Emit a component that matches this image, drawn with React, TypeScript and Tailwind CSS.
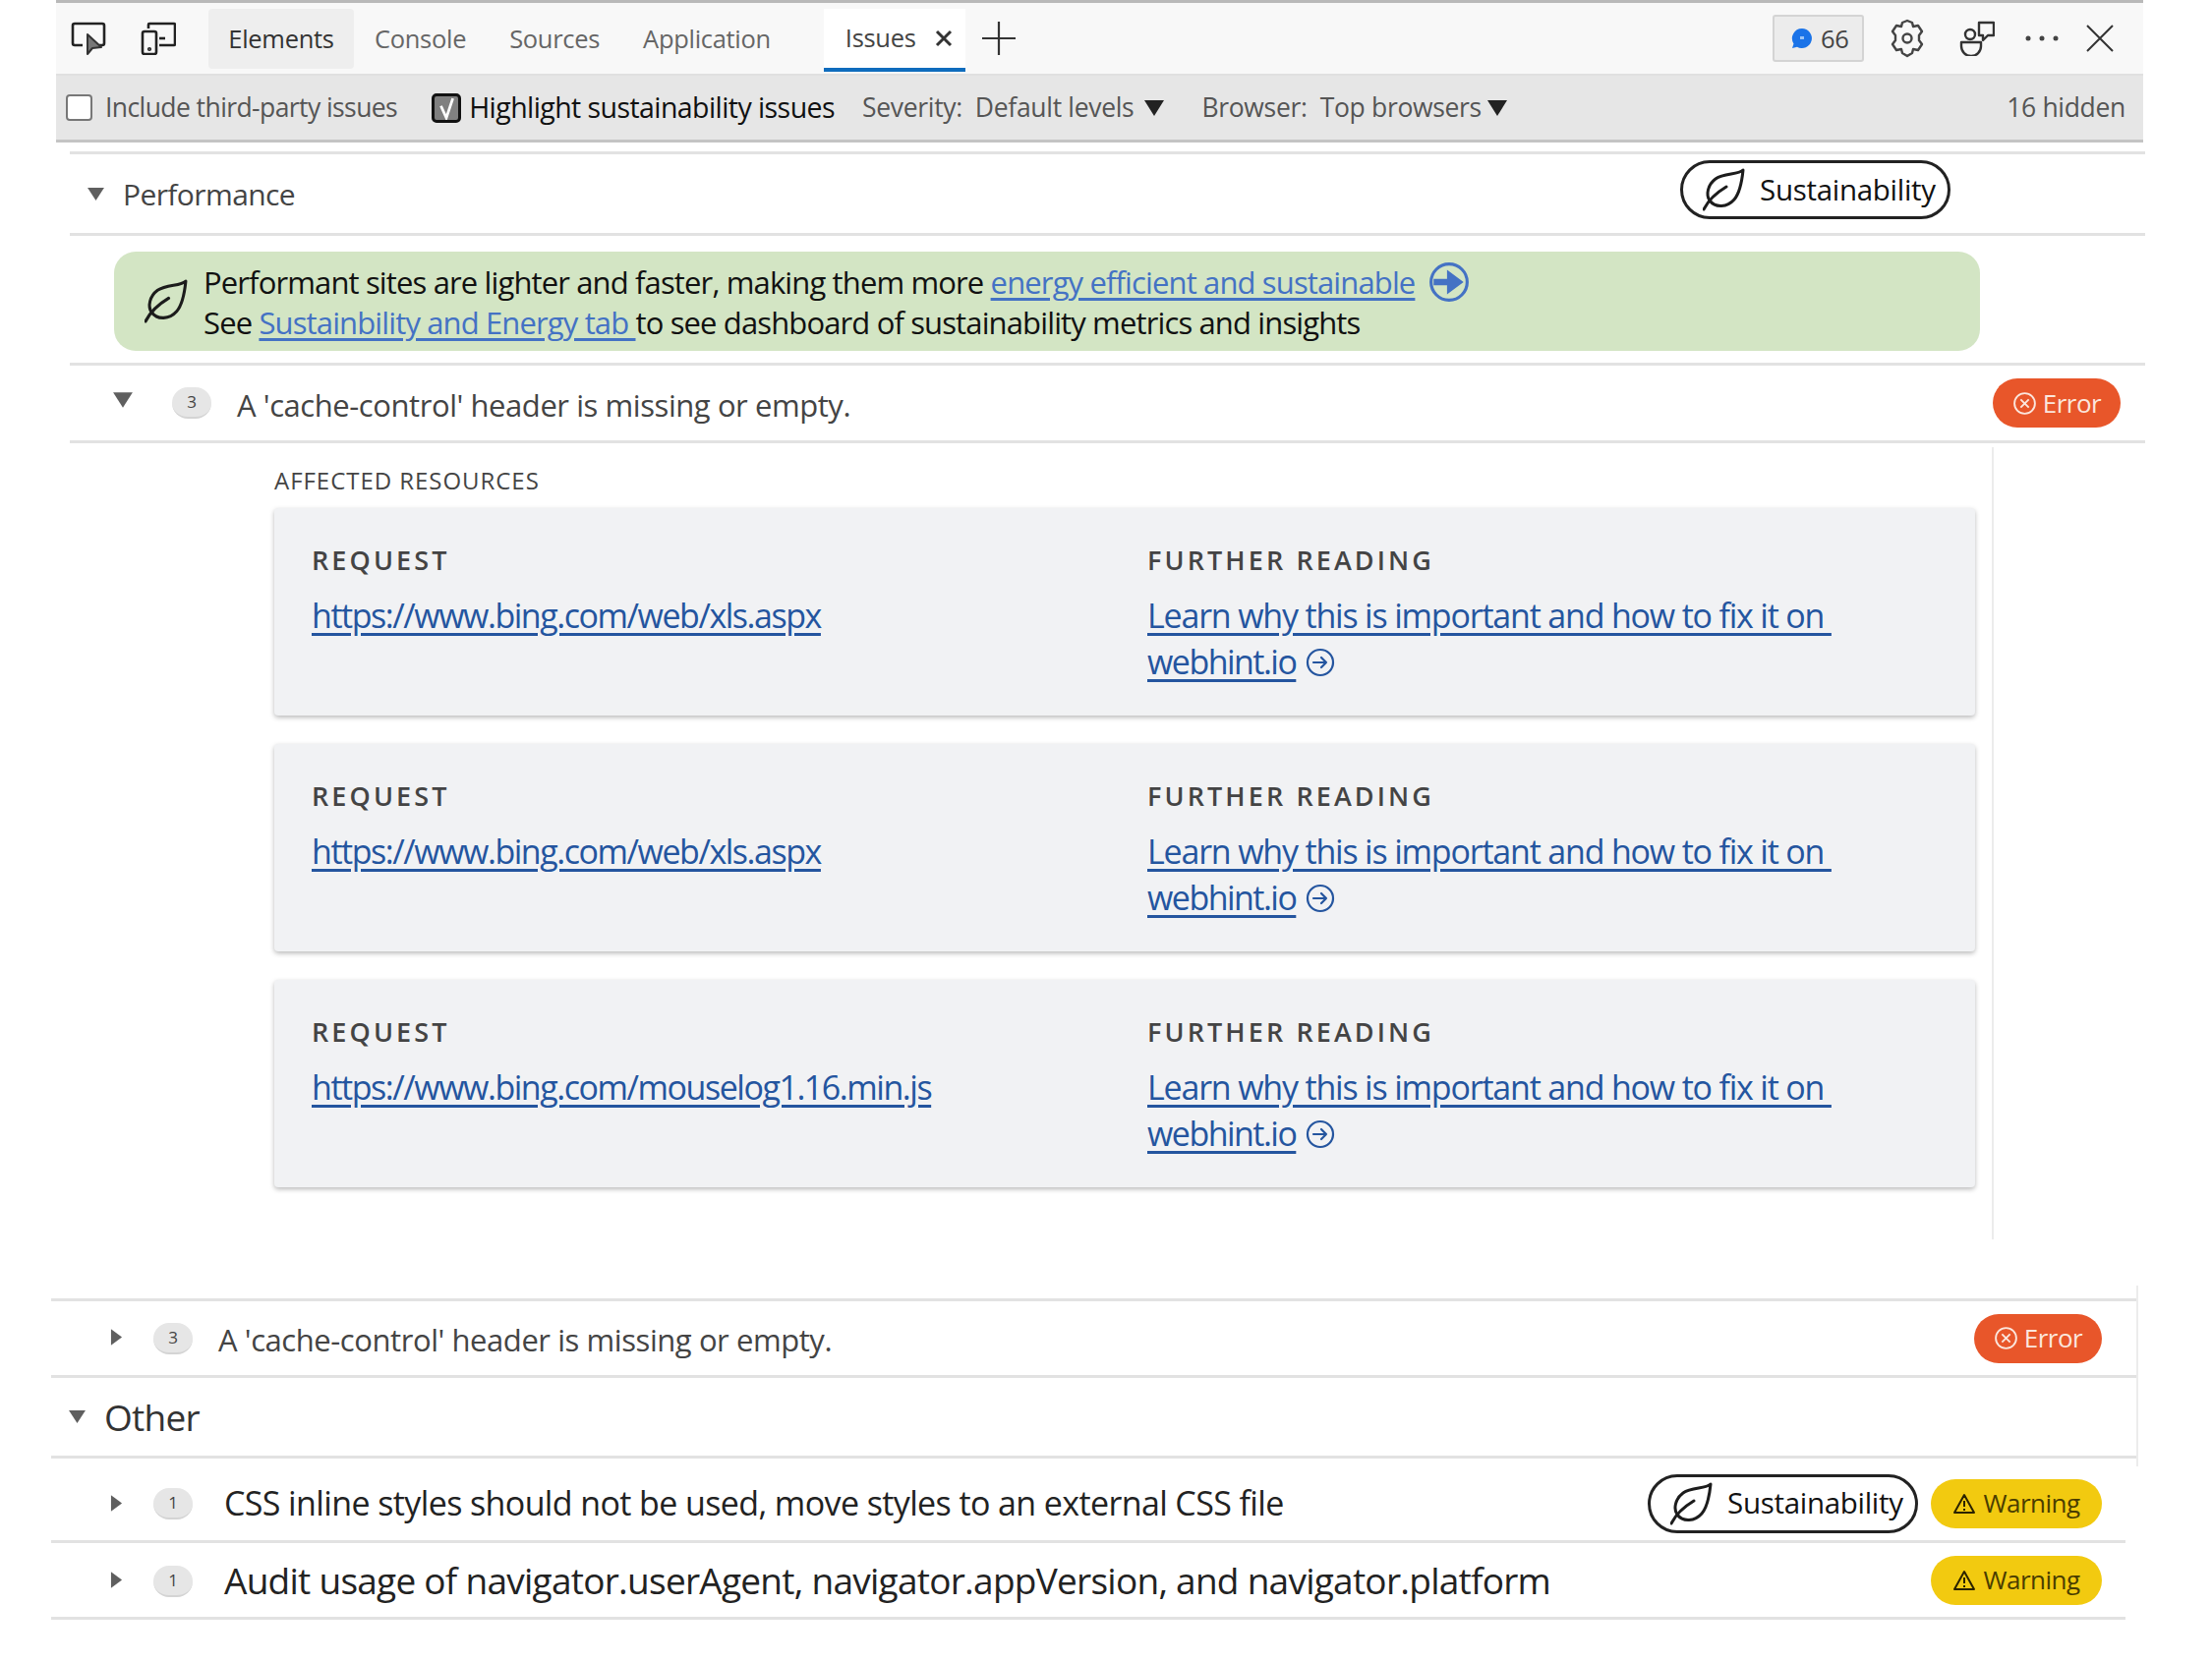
import React from 'react';

const Leaf = ({ className }: { className: string }) => (
  <svg viewBox="0 0 44 44" className={className} fill="none" stroke="#1c1c1c" strokeWidth="3" strokeLinecap="round" strokeLinejoin="round">
    <path d="M41 2C36 7 22 5 13 11C5 17 3 27 7 33C13 41 25 40 32 32C38 25 40 12 41 2Z" />
    <path d="M1 42C6 32 14 25 24 19" />
  </svg>
);

const TriDown = ({ className }: { className: string }) => (
  <svg viewBox="0 0 20 16" className={className} fill="#5f5f5f"><polygon points="1,1 19,1 10,15" /></svg>
);

const TriRight = ({ className }: { className: string }) => (
  <svg viewBox="0 0 14 18" className={className} fill="#5f5f5f"><polygon points="1,0 13,9 1,18" /></svg>
);

const Count = ({ n, className }: { n: number; className: string }) => (
  <div className={`flex h-[32px] w-[40px] shrink-0 items-center justify-center rounded-full border-b-2 border-[#d4d4d4] bg-[#e6e6e6] text-[17px] text-[#444] ${className}`}>{n}</div>
);

const SustainBadge = ({ className }: { className: string }) => (
  <div className={`flex h-[60px] w-[275px] shrink-0 items-center rounded-full border-[3px] border-[#222] bg-white pl-[20px] text-[#111] ${className}`}>
    <Leaf className="h-[44px] w-[44px]" />
    <span className="ml-[14px] text-[29.5px] tracking-[-0.01em]">Sustainability</span>
  </div>
);

const ErrorBadge = () => (
  <div className="flex h-[50px] w-[130px] shrink-0 items-center justify-center gap-[6px] rounded-[25px] bg-[#e8562a] text-[26px] tracking-[-0.02em] text-[#fbe6dd]">
    <svg viewBox="0 0 24 24" className="h-[25px] w-[25px]" fill="none" stroke="#fbe6dd" strokeWidth="1.8">
      <circle cx="12" cy="12" r="10" />
      <path d="M8 8l8 8M16 8l-8 8" />
    </svg>
    <span>Error</span>
  </div>
);

const WarningBadge = () => (
  <div className="flex h-[50px] w-[174px] shrink-0 items-center justify-center gap-[7px] rounded-[25px] bg-[#f2ca10] text-[26px] tracking-[-0.02em] text-[#4a3d00]">
    <svg viewBox="0 0 24 24" className="h-[24px] w-[24px]" fill="none" stroke="#2b2300" strokeWidth="2" strokeLinejoin="round">
      <path d="M12 3L22 21H2Z" />
      <path d="M12 9v6M12 17v2" />
    </svg>
    <span>Warning</span>
  </div>
);

const Card = ({ url }: { url: string }) => (
  <div className="flex h-[211px] w-[1730px] rounded-[4px] bg-[#f1f2f4] pt-[37px] pl-[38px] shadow-[0_2px_5px_rgba(0,0,0,0.28)]">
    <div className="w-[850px]">
      <div className="text-[27px] leading-[32px] font-semibold tracking-[0.115em] text-[#444]">REQUEST</div>
      <a className="mt-[17px] block text-[34px] leading-[47px] tracking-[-0.043em] whitespace-nowrap text-[#24559f] underline underline-offset-[5px]">{url}</a>
    </div>
    <div className="w-[700px]">
      <div className="text-[27px] leading-[32px] font-semibold tracking-[0.115em] text-[#444]">FURTHER READING</div>
      <a className="mt-[17px] block text-[34px] leading-[47px] tracking-[-0.035em] whitespace-nowrap text-[#24559f] underline underline-offset-[5px]">Learn why this is important and how to fix it on&nbsp;</a>
      <div className="flex items-center">
        <a className="text-[34px] leading-[47px] tracking-[-0.045em] text-[#24559f] underline underline-offset-[5px]">webhint.io</a>
        <svg viewBox="0 0 30 30" className="ml-[10px] h-[30px] w-[30px]" fill="none" stroke="#24559f" strokeWidth="2.2" strokeLinecap="round" strokeLinejoin="round">
          <circle cx="15" cy="15" r="13" />
          <path d="M8 15h13M16 10l5 5-5 5" />
        </svg>
      </div>
    </div>
  </div>
);

const App: React.FC = () => {
  return (
    <div className="h-[1691px] w-[2250px] overflow-hidden bg-white font-['Open_Sans',sans-serif] text-[#333]">
      <div className="ml-[57px] w-[2123px] border-t-[3px] border-[#b9b9b9]">
        {/* tab strip */}
        <div className="flex h-[72px] items-center bg-[#f8f8f8] text-[25.5px] tracking-[-0.012em] text-[#666]">
          <svg viewBox="0 0 36 34" className="ml-[15px] h-[34px] w-[36px]" fill="none" stroke="#222" strokeWidth="2.6" strokeLinejoin="round">
            <path d="M12 24H4a2 2 0 0 1-2-2V4a2 2 0 0 1 2-2h28a2 2 0 0 1 2 2v18a2 2 0 0 1-2 2h-3" />
            <path d="M17 13v20l5-6 9-1z" fill="#777" stroke="#333" strokeWidth="2" />
          </svg>
          <svg viewBox="0 0 36 34" className="ml-[35px] h-[34px] w-[36px]" fill="none" stroke="#222" strokeWidth="2.6" strokeLinejoin="round">
            <path d="M8 7V3a1 1 0 0 1 1-1h25a1 1 0 0 1 1 1v20a1 1 0 0 1-1 1H19" />
            <rect x="2" y="10" width="14" height="23" rx="2" />
            <path d="M19 17h6" />
            <circle cx="9" cy="28" r="0.8" />
          </svg>
          <div className="ml-[33px] flex h-[61px] w-[148px] items-center justify-center rounded-[4px] bg-[#eeeeee] text-[#333]">Elements</div>
          <span className="ml-[21px]">Console</span>
          <span className="ml-[44px]">Sources</span>
          <span className="ml-[44px]">Application</span>
          <div className="mt-[3px] ml-[54px] flex h-[64px] w-[144px] items-center border-b-[4px] border-[#0f6cbd] bg-white pl-[22px] text-[#444]">
            <span>Issues</span>
            <svg viewBox="0 0 18 18" className="ml-[19px] h-[18px] w-[18px]" stroke="#333" strokeWidth="3"><path d="M2 2l14 14M16 2L2 16" /></svg>
          </div>
          <svg viewBox="0 0 34 34" className="ml-[17px] h-[34px] w-[34px]" stroke="#333" strokeWidth="2.2"><path d="M17 0v34M0 17h34" /></svg>
          <div className="ml-auto flex h-[48px] w-[93px] items-center rounded-[3px] border-2 border-[#d4d4d4] bg-[#ececec] pl-[16px] text-[#444]">
            <svg viewBox="0 0 24 24" className="h-[24px] w-[24px]" fill="#1a73e8">
              <path d="M12 2a10 10 0 1 1-5 18.7L2 22l1.5-4.6A10 10 0 0 1 12 2z" />
              <rect x="10" y="10" width="4" height="3" fill="#9cc4f5" />
            </svg>
            <span className="ml-[7px]">66</span>
          </div>
          <svg viewBox="0 0 36 40" className="ml-[26px] h-[40px] w-[36px]" fill="none" stroke="#444" strokeWidth="2.4" strokeLinejoin="round">
            <path d="M18 2l5 2 1 4 5-1 4 6-3 4v5l3 4-4 6-5-1-1 4-5 3-5-3-1-4-5 1-4-6 3-4v-5l-3-4 4-6 5 1 1-4z" />
            <circle cx="18" cy="20" r="4.5" />
          </svg>
          <svg viewBox="0 0 36 36" className="ml-[35px] h-[36px] w-[36px]" fill="none" stroke="#333" strokeWidth="2.4" strokeLinejoin="round">
            <circle cx="11" cy="14" r="5" />
            <path d="M2 22h20v4a10 10 0 0 1-20 0z" />
            <path d="M20 2h15v13h-6l-5 5v-5h-4z" />
          </svg>
          <svg viewBox="0 0 36 8" className="ml-[30px] h-[8px] w-[36px]" fill="#444">
            <circle cx="4" cy="4" r="2.5" /><circle cx="18" cy="4" r="2.5" /><circle cx="32" cy="4" r="2.5" />
          </svg>
          <svg viewBox="0 0 28 28" className="mr-[30px] ml-[27px] h-[28px] w-[28px]" stroke="#333" strokeWidth="2"><path d="M1 1l26 26M27 1L1 27" /></svg>
        </div>
        {/* filter bar */}
        <div className="flex h-[70px] items-center border-t-2 border-b-[3px] border-t-[#e0e0e0] border-b-[#c4c4c4] bg-[#e6e6e6] text-[26.5px] tracking-[-0.012em] whitespace-nowrap text-[#555]">
          <div className="ml-[10px] h-[27px] w-[27px] rounded-[4px] border-2 border-[#777] bg-white" />
          <span className="ml-[13px] tracking-[-0.022em]">Include third-party issues</span>
          <div className="ml-[35px] flex h-[30px] w-[30px] items-center justify-center rounded-[5px] border-[3px] border-[#111] bg-[#808080]">
            <svg viewBox="0 0 20 20" className="h-[24px] w-[22px]" fill="none" stroke="#fff" strokeWidth="2.5"><path d="M5 8l5 11L16 1" /></svg>
          </div>
          <span className="ml-[8px] text-[28.5px] tracking-[-0.02em] text-[#111]">Highlight sustainability issues</span>
          <span className="ml-[28px]">Severity:</span>
          <span className="ml-[13px]">Default levels</span>
          <svg viewBox="0 0 20 16" className="ml-[11px] h-[16px] w-[20px]" fill="#222"><polygon points="0,0 20,0 10,16" /></svg>
          <span className="ml-[38px]">Browser:</span>
          <span className="ml-[13px]">Top browsers</span>
          <svg viewBox="0 0 20 16" className="ml-[6px] h-[16px] w-[20px]" fill="#222"><polygon points="0,0 20,0 10,16" /></svg>
          <span className="mr-[18px] ml-auto">16 hidden</span>
        </div>
      </div>

      {/* performance group */}
      <div className="mt-[9px] ml-[71px] w-[2111px]">
        <div className="flex h-[86px] items-center border-y-[3px] border-[#e2e2e2]">
          <TriDown className="ml-[17px] h-[15px] w-[19px]" />
          <span className="ml-[18px] text-[30px] tracking-[-0.02em] text-[#444]">Performance</span>
          <SustainBadge className="-mt-[8px] ml-[1409px]" />
        </div>
        <div className="mt-[16px] ml-[45px] flex h-[101px] w-[1898px] items-center rounded-[22px] bg-[#d3e5c4] text-[31px] leading-[40px] tracking-[-0.028em] whitespace-nowrap text-[#111]">
          <Leaf className="ml-[31px] h-[45px] w-[45px]" />
          <div className="ml-[15px]">
            <div className="flex items-center">
              <span>Performant sites are lighter and faster, making them more&nbsp;</span>
              <a className="text-[#4472c4] underline underline-offset-[4px]">energy efficient and sustainable</a>
              <svg viewBox="0 0 40 40" className="ml-[14px] h-[42px] w-[42px]" fill="#4472c4">
                <circle cx="20" cy="20" r="17.5" fill="none" stroke="#4472c4" strokeWidth="3" />
                <path d="M5 17h13V8l16 12-16 12v-9H5z" />
              </svg>
            </div>
            <div>
              See <a className="text-[#4472c4] underline underline-offset-[4px]">Sustainbility and Energy tab&nbsp;</a>to see dashboard of sustainability metrics and insights
            </div>
          </div>
        </div>
        <div className="mt-[12px] flex h-[82px] items-center border-y-[3px] border-[#e2e2e2]">
          <TriDown className="mb-[6px] ml-[43px] h-[18px] w-[22px]" />
          <Count n={3} className="ml-[39px]" />
          <span className="mt-[4px] ml-[26px] text-[31px] tracking-[-0.014em] text-[#444]">A 'cache-control' header is missing or empty.</span>
          <div className="mr-[25px] ml-auto">
            <ErrorBadge />
          </div>
        </div>
        <div className="mt-[4px] h-[806px] w-[1957px] border-r-2 border-[#ececec] pt-[19px] pl-[208px]">
          <div className="text-[24px] leading-[30px] font-medium tracking-[0.04em] text-[#444]">AFFECTED RESOURCES</div>
          <div className="mt-[13px] flex flex-col gap-[29px]">
            <Card url="https://www.bing.com/web/xls.aspx" />
            <Card url="https://www.bing.com/web/xls.aspx" />
            <Card url="https://www.bing.com/mouselog1.16.min.js" />
          </div>
        </div>
      </div>

      {/* collapsed issue + other group */}
      <div className="mt-[47px] ml-[52px] w-[2123px] border-r-2 border-[#ececec]">
        <div className="h-[13px]" />
        <div className="flex h-[81px] items-center border-y-[3px] border-[#e2e2e2]">
          <TriRight className="mb-[2px] ml-[60px] h-[17px] w-[13px]" />
          <Count n={3} className="ml-[31px]" />
          <span className="mt-[3px] ml-[26px] text-[31px] tracking-[-0.014em] text-[#444]">A 'cache-control' header is missing or empty.</span>
          <div className="mr-[35px] ml-auto">
            <ErrorBadge />
          </div>
        </div>
        <div className="flex h-[82px] items-center border-b-[3px] border-[#e2e2e2]">
          <TriDown className="ml-[17px] h-[15px] w-[19px]" />
          <span className="ml-[18px] text-[37px] tracking-[-0.02em] text-[#333]">Other</span>
        </div>
        <div className="h-[8px]" />
      </div>
      <div className="-mt-[8px] ml-[52px] w-[2110px]">
        <div className="flex h-[86px] items-center border-b-[3px] border-[#e2e2e2] pt-[8px]">
          <TriRight className="ml-[60px] h-[17px] w-[13px]" />
          <Count n={1} className="ml-[31px]" />
          <span className="ml-[32px] text-[34px] tracking-[-0.018em] text-[#222]">CSS inline styles should not be used, move styles to an external CSS file</span>
          <SustainBadge className="ml-auto" />
          <div className="mr-[24px] ml-[13px]">
            <WarningBadge />
          </div>
        </div>
        <div className="flex h-[78px] items-center border-b-[3px] border-[#e2e2e2]">
          <TriRight className="ml-[60px] h-[17px] w-[13px]" />
          <Count n={1} className="mt-[3px] ml-[31px]" />
          <span className="ml-[32px] text-[37px] tracking-[-0.02em] text-[#222]">Audit usage of navigator.userAgent, navigator.appVersion, and navigator.platform</span>
          <div className="mr-[24px] ml-auto">
            <WarningBadge />
          </div>
        </div>
      </div>
    </div>
  );
};

export default App;
